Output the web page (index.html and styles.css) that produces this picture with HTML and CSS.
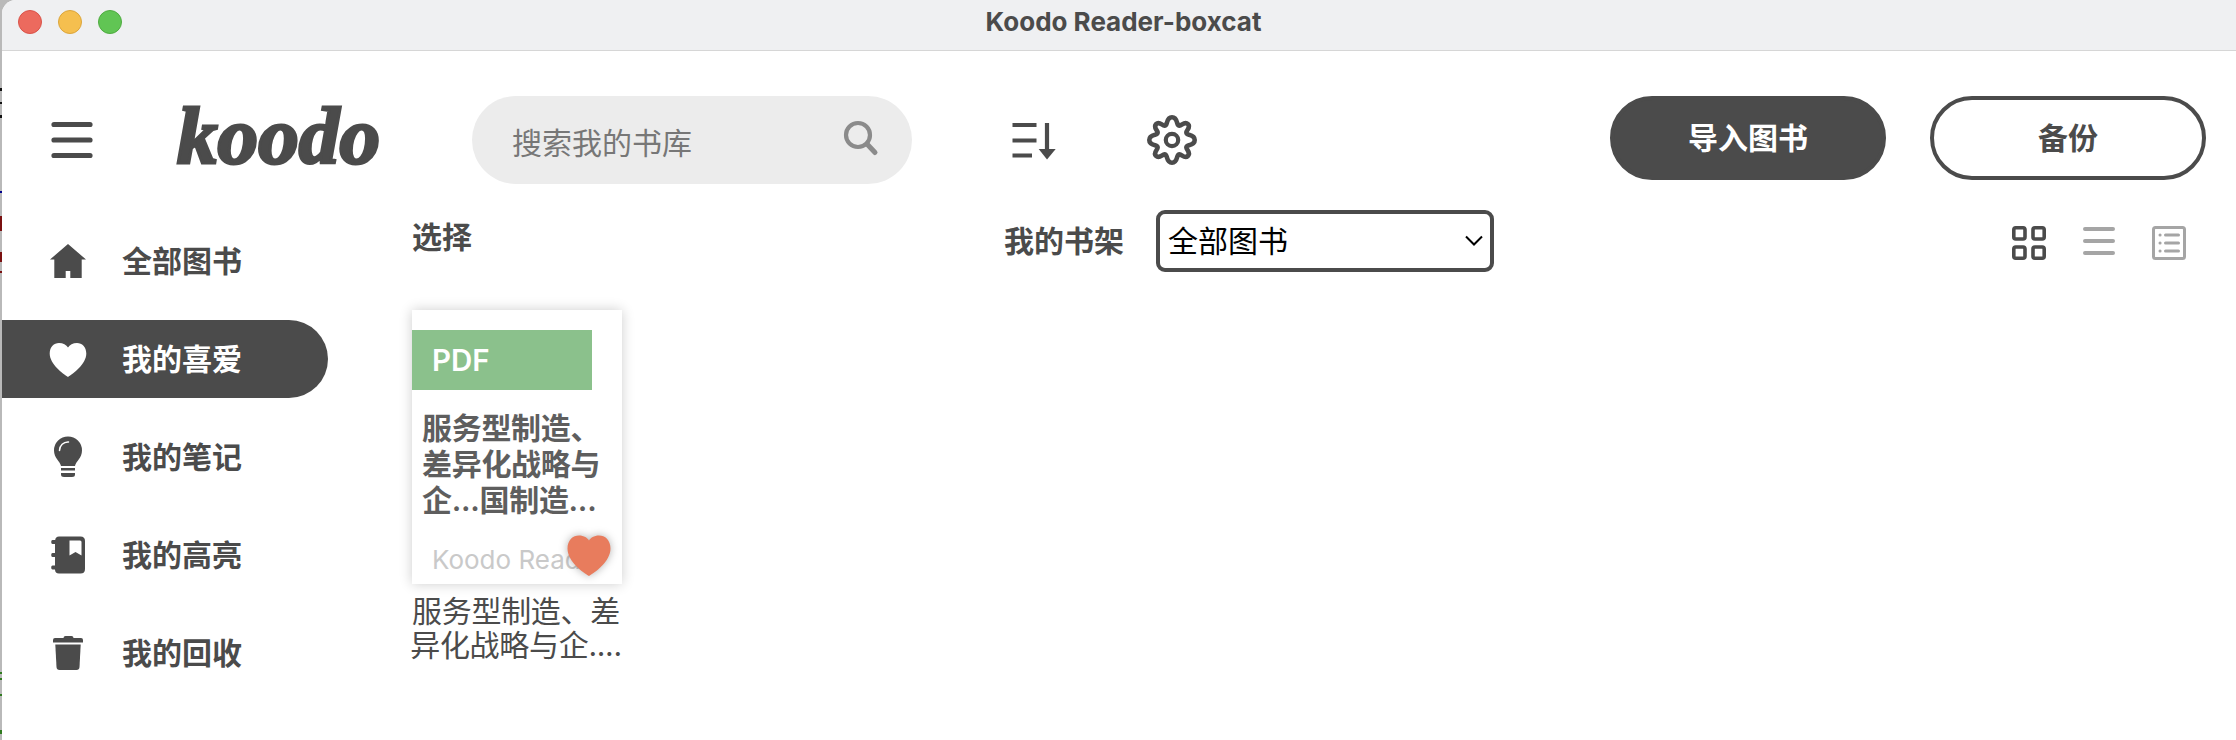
FILE: index.html
```html
<!DOCTYPE html>
<html lang="zh-CN">
<head>
  <meta charset="UTF-8">
  <title>Koodo Reader-boxcat</title>
  <link rel="stylesheet" href="styles.css">
</head>
<body>
  <div class="window">
    <div class="titlebar">
      <span class="dot red"></span>
      <span class="dot yellow"></span>
      <span class="dot green"></span>
      <span class="window-title">Koodo Reader-boxcat</span>
    </div>

    <header class="header">
      <svg class="menu-icon" width="42" height="38" viewBox="0 0 42 38">
        <path d="M3 3.500h36M3 19h36M3 34.500h36" fill="none" stroke="#4b4b4b" stroke-width="5.200" stroke-linecap="round"/>
      </svg>
      <svg class="logo" width="212" height="70" viewBox="0 0 212 70">
        <text x="4" y="58" textLength="203" lengthAdjust="spacingAndGlyphs">koodo</text>
      </svg>
      <div class="search">
        <span>搜索我的书库</span>
        <svg width="36" height="36" viewBox="0 0 36 36">
          <circle cx="15" cy="15" r="12" fill="none" stroke="#8b8b8b" stroke-width="4.200"/>
          <path d="M24 24l8 8.500" stroke="#8b8b8b" stroke-width="5" stroke-linecap="round"/>
        </svg>
      </div>
      <svg class="sort-icon" width="44" height="38" viewBox="0 0 44 38">
        <path d="M0.500 4h24M0.500 19.500h24M0.500 34.500h19.500M35 2v28" fill="none" stroke="#4b4b4b" stroke-width="4.200"/>
        <path d="M26.700 28h17L35 38.500z" fill="#4b4b4b"/>
      </svg>
      <svg class="gear-icon" width="50" height="50" viewBox="0 0 50 50">
        <path fill="none" stroke="#4b4b4b" stroke-width="4.600" stroke-linejoin="round" d="M19.800 8C20.800 4 22 2.300 25 2.300S29.200 4 30.200 8C31.400 12 33.500 10.600 35.200 9.400C37.500 7.800 39.600 7.800 41 9.200S42.200 12.500 40.600 14.800C39.400 16.500 38 18.600 42 19.800C46 20.800 47.700 22 47.700 25S46 29.200 42 30.200C38 31.400 39.400 33.500 40.600 35.200C42.200 37.500 42.200 39.600 40.800 41S37.500 42.200 35.200 40.600C33.500 39.400 31.400 38 30.200 42C29.200 46 28 47.700 25 47.700S20.800 46 19.800 42C18.600 38 16.500 39.400 14.800 40.600C12.500 42.200 10.400 42.200 9 40.800S7.800 37.500 9.400 35.200C10.600 33.500 12 31.400 8 30.200C4 29.200 2.300 28 2.300 25S4 20.800 8 19.800C12 18.600 10.600 16.500 9.400 14.800C7.800 12.500 7.800 10.400 9.200 9S12.500 7.800 14.800 9.400C16.500 10.600 18.600 12 19.800 8Z"/>
        <circle cx="25" cy="25" r="6.200" fill="none" stroke="#4b4b4b" stroke-width="4.200"/>
      </svg>
      <div class="actions">
        <div class="btn btn-dark">导入图书</div>
        <div class="btn">备份</div>
      </div>
    </header>

    <div class="content">
      <nav class="sidebar">
        <div class="nav-item">
          <svg width="40" height="40" viewBox="0 0 40 40">
            <path d="M20 3L38 18.500H33.700V37H22.300V30H17.700V37H6.300V18.500H2z"/>
          </svg>
          <span>全部图书</span>
        </div>
        <div class="nav-item active">
          <svg width="40" height="40" viewBox="0 0 40 40">
            <path d="M20 38C15 35 1.700 25 1.700 14.500C1.700 8 6 4 11 4C15 4 18.500 6 20 8.500C21.500 6 25 4 29 4C34 4 38.300 8 38.300 14.500C38.300 25 25 35 20 38z"/>
          </svg>
          <span>我的喜爱</span>
        </div>
        <div class="nav-item">
          <svg width="40" height="40" viewBox="0 0 40 40">
            <path d="M13 29C12 24 6 21 6 13.500A14 14 0 0 1 34 13.500C34 21 28 24 27 29z"/>
            <path d="M11.500 13.500A8.500 8.500 0 0 1 20.500 5" fill="none" stroke="#fff" stroke-width="1.500" stroke-linecap="round"/>
            <path d="M13 31h14v2.500H13zM13 36h14v1.500q0 2.500-3 2.500h-8q-3 0-3-2.500z"/>
          </svg>
          <span>我的笔记</span>
        </div>
        <div class="nav-item">
          <svg width="40" height="40" viewBox="0 0 40 40">
            <path d="M11 1.500h21.500q4.500 0 4.500 4.500v28q0 4.500-4.500 4.500h-21.500q-4 0-4-4H4.500q-1.300 0-1.300-2t1.300-2H7V22H4.500q-1.300 0-1.300-2t1.300-2H7V9H4.500q-1.300 0-1.300-2t1.300-2H7.200q.3-3.500 3.800-3.500z"/>
            <path d="M21.500 5.500h10.500q1.500 0 1.500 1.500v13.500l-6-3.500-6 3.500z" fill="#fff"/>
          </svg>
          <span>我的高亮</span>
        </div>
        <div class="nav-item">
          <svg width="40" height="40" viewBox="0 0 40 40">
            <path d="M15.500 5q0-2 2-2h6q2 0 2 2h7.500q2 0 2 2v2.500H5V7q0-2 2-2z"/>
            <path d="M7.300 11.500h25.400L31.500 34q-.2 3-3 3h-17q-2.800 0-3-3z"/>
          </svg>
          <span>我的回收</span>
        </div>
      </nav>

      <main class="main">
        <div class="toolbar">
          <span class="select-label">选择</span>
          <span class="shelf-label">我的书架</span>
          <div class="shelf-select">
            <span>全部图书</span>
            <svg width="18" height="12" viewBox="0 0 18 12">
              <path d="M1 1.500l8 8 8-8" fill="none" stroke="#000" stroke-width="2"/>
            </svg>
          </div>
          <div class="view-modes">
            <svg width="34" height="34" viewBox="0 0 34 34" fill="none" stroke="#4b4b4b" stroke-width="3.600">
              <rect x="1.800" y="1.800" width="11.200" height="11.200" rx="2"/>
              <rect x="21" y="1.800" width="11.200" height="11.200" rx="2"/>
              <rect x="1.800" y="21" width="11.200" height="11.200" rx="2"/>
              <rect x="21" y="21" width="11.200" height="11.200" rx="2"/>
            </svg>
            <svg width="34" height="34" viewBox="0 0 34 34" fill="none" stroke="#a5a5a5" stroke-width="4" stroke-linecap="round">
              <path d="M3 3h28M3 15h28M3 27h28"/>
            </svg>
            <svg width="34" height="34" viewBox="0 0 34 34" fill="none" stroke="#a5a5a5" stroke-width="3" stroke-linecap="round">
              <rect x="1.500" y="1.500" width="31" height="31" rx="2"/>
              <path d="M13.500 9h13M13.500 17h13M13.500 25h13M8 9h.1M8 17h.1M8 25h.1"/>
            </svg>
          </div>
        </div>

        <div class="book">
          <div class="cover">
            <div class="format">PDF</div>
            <div class="cover-title">服务型制造、<br>差异化战略与<br>企...国制造...</div>
            <div class="cover-author">Koodo Read</div>
            <svg class="love" width="44" height="42" viewBox="0 0 44 42">
              <path d="M22 41C16 37.500 0.500 26.500 0.500 13.500C0.500 5 6 0.500 12 0.500C17 0.500 20.500 3 22 5.500C23.500 3 27 0.500 32 0.500C38 0.500 43.500 5 43.500 13.500C43.500 26.500 28 37.500 22 41z" fill="#e87c5d"/>
            </svg>
          </div>
          <div class="book-name">服务型制造、差<br>异化战略与企....</div>
        </div>
      </main>
    </div>
  </div>
</body>
</html>
```
FILE: styles.css
```css
* { box-sizing: border-box; }
body {
  margin: 0;
  padding-left: 2px;
  height: 740px;
  overflow: hidden;
  font-family: Inter, "Noto Sans CJK SC", sans-serif;
  font-size: 30px;
  color: #4b4b4b;
  background:
    linear-gradient(#111, #111) 0 88px / 2px 3px no-repeat,
    linear-gradient(#111, #111) 0 102px / 2px 2px no-repeat,
    linear-gradient(#111, #111) 0 115px / 2px 3px no-repeat,
    linear-gradient(#00008b, #00008b) 0 191px / 2px 2px no-repeat,
    linear-gradient(#7a1010, #7a1010) 0 216px / 2px 15px no-repeat,
    linear-gradient(#7a1010, #7a1010) 0 252px / 2px 10px no-repeat,
    linear-gradient(#7a1010, #7a1010) 0 271px / 2px 2px no-repeat,
    linear-gradient(#2f7a1f, #2f7a1f) 0 672px / 2px 2px no-repeat,
    linear-gradient(#2f7a1f, #2f7a1f) 0 678px / 2px 2px no-repeat,
    linear-gradient(#2f7a1f, #2f7a1f) 0 694px / 2px 2px no-repeat,
    linear-gradient(#2f7a1f, #2f7a1f) 0 730px / 2px 4px no-repeat,
    #b9b9b9;
}
svg {
  display: block;
  flex: none;
  overflow: visible;
}
.window {
  height: 740px;
  background: #fff;
  border-top-left-radius: 14px;
  overflow: hidden;
}

/* title bar */
.titlebar {
  display: flex;
  align-items: center;
  gap: 16px;
  height: 51px;
  padding: 0 0 6px 16px;
  background: #eff0f2;
  border-bottom: 1px solid #d6d6d6;
}
.dot {
  width: 24px;
  height: 24px;
  border-radius: 50%;
  border: 1px solid #d9534a;
  background: #ec6a5e;
}
.yellow {
  background: #f5bf4f;
  border-color: #dba53c;
}
.green {
  background: #61c554;
  border-color: #4fab41;
}
.window-title {
  flex: 1;
  padding: 0 127px 2px 0;
  text-align: center;
  font-size: 26px;
  font-weight: 700;
}

/* header */
.header {
  display: flex;
  align-items: center;
  height: 150px;
  padding: 28px 30px 0 49px;
}
.logo {
  margin-left: 80px;
}
.logo text {
  font-family: "Liberation Serif", serif;
  font-size: 80px;
  font-weight: 700;
  font-style: italic;
  fill: #4b4b4b;
  stroke: #4b4b4b;
  stroke-width: 3px;
}
.search {
  display: flex;
  justify-content: space-between;
  align-items: center;
  width: 440px;
  height: 88px;
  margin-left: 87px;
  padding: 0 33px 0 40px;
  border-radius: 44px;
  background: #ececec;
  color: #777;
}
.search span {
  padding-top: 2px;
}
.search svg {
  margin-top: -4px;
}
.sort-icon {
  margin-left: 100px;
}
.gear-icon {
  margin-left: 91px;
}
.actions {
  display: flex;
  gap: 44px;
  margin: 0 0 4px auto;
}
.btn {
  width: 276px;
  height: 84px;
  border: 4px solid #4b4b4b;
  border-radius: 42px;
  line-height: 76px;
  text-align: center;
  font-weight: 600;
}
.btn-dark {
  background: #4b4b4b;
  color: #fff;
}

/* sidebar */
.content {
  display: flex;
}
.sidebar {
  display: flex;
  flex-direction: column;
  gap: 20px;
  width: 410px;
  padding-top: 21px;
}
.nav-item {
  display: flex;
  align-items: center;
  gap: 34px;
  width: 326px;
  height: 78px;
  padding-left: 46px;
  border-radius: 0 39px 39px 0;
  font-weight: 600;
  fill: #4b4b4b;
}
.nav-item span {
  padding-bottom: 5px;
}
.nav-item.active {
  background: #4b4b4b;
  color: #fff;
  fill: #fff;
}

/* books */
.main {
  flex: 1;
}
.toolbar {
  display: flex;
  align-items: center;
  height: 80px;
  padding-right: 50px;
  font-weight: 600;
}
.select-label {
  width: 592px;
  margin-bottom: 13px;
}
.shelf-label {
  margin-bottom: 5px;
}
.shelf-select {
  display: flex;
  align-items: center;
  justify-content: space-between;
  width: 338px;
  height: 62px;
  margin-left: 32px;
  padding: 0 7px 0 8px;
  border: 4px solid #4b4b4b;
  border-radius: 9px;
  color: #000;
  font-weight: 400;
}
.shelf-select span {
  padding-bottom: 4px;
}
.view-modes {
  display: flex;
  gap: 36px;
  margin: 4px 0 0 auto;
}
.book {
  width: 210px;
  margin-top: 29px;
}
.cover {
  position: relative;
  height: 274px;
  padding-top: 20px;
  box-shadow: 0 0 12px rgba(0, 0, 0, 0.2);
}
.format {
  width: 180px;
  height: 60px;
  padding-left: 20px;
  line-height: 60px;
  background: #8bc18c;
  color: #fff;
  font-size: 29.5px;
  font-weight: 600;
}
.cover-title {
  margin: 20px 0 0 10px;
  line-height: 36px;
  font-weight: 600;
  letter-spacing: -0.3px;
  color: #5e5e5e;
  white-space: nowrap;
}
.cover-author {
  margin: 26px 0 0 20px;
  font-size: 26px;
  line-height: 32px;
  color: #c9c9c9;
}
.love {
  position: absolute;
  right: 11px;
  bottom: 7px;
  filter: drop-shadow(0 0 4px rgba(0, 0, 0, 0.3));
}
.book-name {
  margin: 10px 0 0 -2px;
  line-height: 34px;
  text-align: center;
  letter-spacing: -0.3px;
  white-space: nowrap;
}
```
